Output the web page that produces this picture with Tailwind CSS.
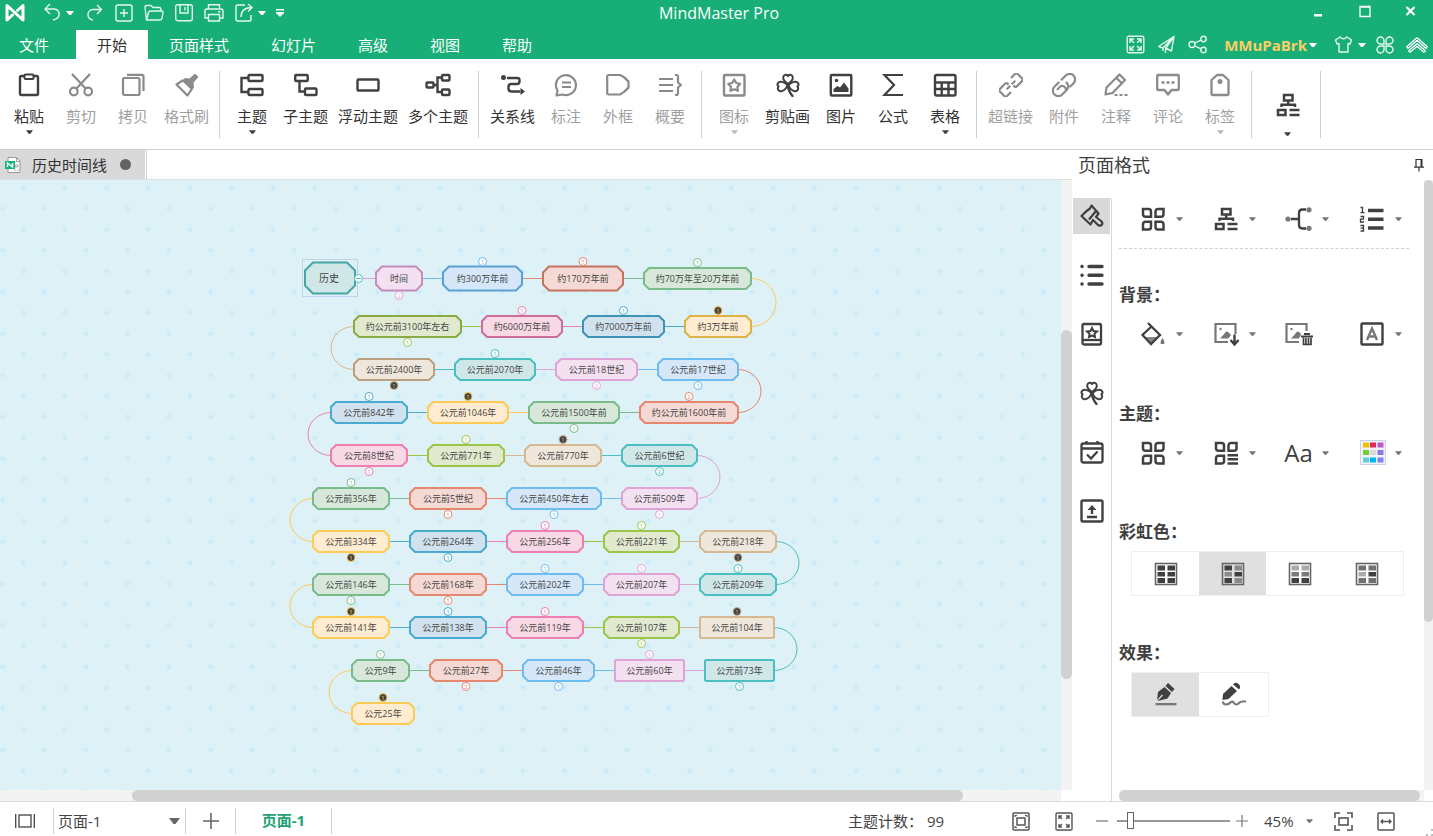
<!DOCTYPE html>
<html lang="zh-CN">
<head>
  <meta charset="UTF-8">
  <meta name="viewport" content="width=device-width, initial-scale=1.0">
  <title>MindMaster Pro</title>
  <script src="https://cdn.jsdelivr.net/npm/@tailwindcss/browser@4"></script>
  <style>
    body, button, select, input {
      font-family: 'Open Sans', 'Noto Sans CJK SC', sans-serif;
    }
  </style>
</head>
<body class="h-screen flex flex-col overflow-hidden bg-white text-[15px] leading-5 text-[#333]">

<!-- shared icons -->
<svg class="hidden">
  <symbol id="caret" viewBox="0 0 8 4"><path d="M0 0h8L5 4H3z" fill="currentColor"/></symbol>
  <symbol id="four" viewBox="0 0 24 24">
    <g fill="none" stroke="currentColor" stroke-width="2.5">
      <path d="M2 2h5.500a2.500 2.500 0 0 1 2.500 2.500V9.800H4.500A2.500 2.500 0 0 1 2 7.500z"/>
      <path d="M22.500 2H17a2.500 2.500 0 0 0-2.500 2.500v5.300H20a2.500 2.500 0 0 0 2.500-2.500z"/>
      <path d="M2 22.500h5.500A2.500 2.500 0 0 0 10 20v-5.300H4.500A2.500 2.500 0 0 0 2 17.200z"/>
      <path d="M22.500 22.500H17a2.500 2.500 0 0 1-2.500-2.500v-5.300H20a2.500 2.500 0 0 1 2.500 2.500z"/>
    </g>
  </symbol>
  <symbol id="org" viewBox="0 0 24 24">
    <g fill="none" stroke="currentColor" stroke-width="2.500">
      <path d="M8 2h8.500v5.500H8zM2 17h7.500v5H2zM12.200 8v4M5.500 14v-2.200h13.500v2.200M13.500 17h10M13.500 22h10"/>
    </g>
  </symbol>
  <symbol id="clover" viewBox="0 0 24 24">
    <g fill="none" stroke="currentColor" stroke-width="2" stroke-linejoin="round" stroke-linecap="round">
      <path d="M12 11C9 9 7 7 7.200 4.500 7.500 1.500 11 .800 12 3.200 13 .800 16.500 1.500 16.800 4.500 17 7 15 9 12 11z"/>
      <path d="M11.500 12C9 9.500 7 8.500 4.500 8.800 1.500 9.200 .500 12 2.600 13.300 .800 15.500 2.500 18.500 5 18.200 8 18 10.500 15 11.500 12z"/>
      <path d="M12.500 12c2.500-2.500 4.500-3.500 7-3.200 3 .400 4 3.200 1.900 4.500 1.800 2.200.100 5.200-2.400 4.900C16 18 13.500 15 12.500 12z"/>
      <path d="M12 12c0 4 1.500 7.500 4.500 11" stroke-width="2.400"/>
    </g>
  </symbol>
</svg>

<!-- title bar + menu tabs -->
<header class="bg-[#17ae78] text-white shrink-0">
  <div class="flex items-center h-[30px] pb-1">
    <div class="flex-1 flex items-center gap-[10px] pl-[5px]">
      <svg class="w-5 h-5 mr-[7px]" viewBox="0 0 20 20" fill="none" stroke="#fff" stroke-width="3" stroke-linejoin="round" stroke-linecap="round"><path d="M7.500 12L2 17V2.500l16 14.500V2.500l-5.500 5"/></svg>
      <div class="flex items-center gap-1">
        <button aria-label="撤销"><svg class="w-5 h-5" viewBox="0 0 20 20" fill="none" stroke="#e4f7ef" stroke-width="1.400"><path d="M8 1L3 6l5 5M3 6h9a5 5 0 0 1 5 6q-.500 4-6 5"/></svg></button>
        <button aria-label="撤销选项"><svg class="w-2 h-1"><use href="#caret"/></svg></button>
      </div>
      <button aria-label="重做"><svg class="w-5 h-5" viewBox="0 0 20 20" fill="none" stroke="#e4f7ef" stroke-width="1.400"><path d="M13 2l4.500 4.500L13 11M17.500 6.500H9A5 5 0 0 0 4 12q0 4 5 5"/></svg></button>
      <button aria-label="新建"><svg class="w-5 h-5" viewBox="0 0 20 20" fill="none" stroke="#e4f7ef" stroke-width="1.400"><rect x="2" y="2" width="16" height="16" rx="2"/><path d="M10 6v8M6 10h8"/></svg></button>
      <button aria-label="打开"><svg class="w-5 h-5" viewBox="0 0 20 20" fill="none" stroke="#e4f7ef" stroke-width="1.400" stroke-linejoin="round"><path d="M2.500 17L1 4q0-1.500 1.500-1.500H7l2 2h6.500Q17 4.500 17 8M2.500 17H16q1.500 0 2-1.500l1-6Q19 8 17.500 8H6.500Q5 8 4.500 9.500z"/></svg></button>
      <button aria-label="保存"><svg class="w-5 h-5" viewBox="0 0 20 20" fill="none" stroke="#e4f7ef" stroke-width="1.400"><rect x="1.700" y="1.700" width="16.600" height="16" rx="2"/><path d="M6 2v8h8V2M11 4v3.500"/></svg></button>
      <button aria-label="打印"><svg class="w-5 h-5" viewBox="0 0 20 20" fill="none" stroke="#e4f7ef" stroke-width="1.400"><path d="M4.500 6V1.700h11V6M4.500 15H1V8q0-2 2-2h14q2 0 2 2v7h-3.500M4.500 11.500h11V18h-11zM14 8.700h2.500"/></svg></button>
      <div class="flex items-center gap-1">
        <button aria-label="导出"><svg class="w-5 h-5" viewBox="0 0 20 20" fill="none" stroke="#e4f7ef" stroke-width="1.400"><path d="M11 2H3.500Q2 2 2 3.500v13Q2 18 3.500 18h12q1.500 0 1.500-1.500V12M7 14q0-9 10-9.500M14 1l4 3.500L14 8.500"/></svg></button>
        <button aria-label="导出选项"><svg class="w-2 h-1"><use href="#caret"/></svg></button>
      </div>
      <button aria-label="自定义快速访问"><svg class="w-2 h-2" viewBox="0 0 8 8" fill="#fff"><path d="M0 0h8v1.500H0zM0 3h8v1L4 8 0 4z"/></svg></button>
    </div>
    <h1 class="text-base">MindMaster Pro</h1>
    <div class="flex-1 flex justify-end">
      <button aria-label="最小化" class="w-[46px] h-[22px] flex justify-center items-center"><svg class="w-4 h-4" viewBox="0 0 16 16"><path d="M4 9h8v2.500H4z" fill="#fff"/></svg></button>
      <button aria-label="最大化" class="w-[46px] h-[22px] flex justify-center items-center"><svg class="w-4 h-4" viewBox="0 0 16 16"><path d="M4 1.500h10v10H4z M3.500 2h11" fill="none" stroke="#fff" stroke-width="1.300"/></svg></button>
      <button aria-label="关闭" class="w-[46px] h-[22px] flex justify-center items-center"><svg class="w-4 h-4" viewBox="0 0 16 16"><path d="M4.500 2l8 8M12.500 2l-8 8" stroke="#fff" stroke-width="2.200"/></svg></button>
    </div>
  </div>
  <div class="flex h-[29px]">
    <nav class="flex flex-1">
      <button class="pl-[19px] pr-[27px]">文件</button>
      <button class="px-[21px] bg-white text-[#333]">开始</button>
      <button class="px-[21px]">页面样式</button>
      <button class="px-[21px]">幻灯片</button>
      <button class="px-[21px]">高级</button>
      <button class="px-[21px]">视图</button>
      <button class="px-[21px]">帮助</button>
    </nav>
    <div class="flex items-center gap-3 pr-[5px]">
      <button aria-label="全屏"><svg class="w-[19px] h-[19px]" viewBox="0 0 19 19" fill="none" stroke="#e4f7ef" stroke-width="1.400"><rect x="1.200" y="1.200" width="16.600" height="16.600" rx="1.500"/><path d="M4 8V4h4M4 4l4 4M11 4h4v4M15 4l-4 4M4 11v4h4M4 15l4-4M15 11v4h-4M15 15l-4-4" stroke-width="1.500"/></svg></button>
      <button aria-label="发送"><svg class="w-[19px] h-[19px]" viewBox="0 0 19 19" fill="none" stroke="#e4f7ef" stroke-width="1.400" stroke-linejoin="round"><path d="M1.500 11.500L17 1.500 14.500 16 8.500 13 M6 13L17 1.500 8.500 13.500V18M1.500 11.500L6 13v3"/></svg></button>
      <button aria-label="分享"><svg class="w-[19px] h-[19px]" viewBox="0 0 19 19" fill="none" stroke="#e4f7ef" stroke-width="1.400"><circle cx="4" cy="9.500" r="3"/><circle cx="15.500" cy="4" r="2.700"/><circle cx="15.500" cy="15" r="2.700"/><path d="M6.700 8.200L13 5M6.700 10.800l6.300 3"/></svg></button>
      <button class="flex items-center gap-[2px] ml-[5px] text-[#fbce65] font-bold">MMuPaBrk<svg class="w-2 h-1 text-white"><use href="#caret"/></svg></button>
      <div class="flex items-center gap-[10px] ml-[5px]">
        <button aria-label="皮肤" class="flex items-center gap-[5px]"><svg class="w-[19px] h-[19px]" viewBox="0 0 19 19" fill="none" stroke="#e4f7ef" stroke-width="1.400" stroke-linejoin="round"><path d="M6 2Q9.500 5.500 13 2l4.500 3-1.500 4-2-.500V17H5V8.500L3 9 1.500 5z"/></svg><svg class="w-2 h-1"><use href="#caret"/></svg></button>
        <button aria-label="应用"><svg class="w-[18px] h-[18px]" viewBox="0 0 18 18" fill="none" stroke="#e4f7ef" stroke-width="1.400"><path d="M8 8H4.700A3.500 3.500 0 1 1 8 4.700zM10 8h3.300A3.500 3.500 0 1 0 10 4.700zM8 10H4.700A3.500 3.500 0 1 0 8 13.300zM10 10h3.300A3.500 3.500 0 1 1 10 13.300z"/></svg></button>
      </div>
      <button aria-label="收起功能区"><svg class="w-[22px] h-[16px]" viewBox="0 0 22 16" fill="none" stroke-linejoin="round" stroke-linecap="round"><path d="M2 10l9-8 9 8M4 14l7-6 7 6" stroke="#fff" stroke-width="3.400"/><path d="M2 10l9-8 9 8M4 14l7-6 7 6" stroke="#17ae78" stroke-width="1"/></svg></button>
    </div>
  </div>
</header>

<!-- ribbon -->
<section class="flex shrink-0 h-[91px] pt-3 pl-[3px] border-b border-[#cfcfcf] text-[#404040]" aria-label="开始">
  <div class="flex h-[67px] pr-[5px] border-r border-[#d0d0d0]">
    <button class="w-[52px] flex flex-col items-center pt-[2px]">
      <svg class="w-6 h-6" viewBox="0 0 24 24" fill="none" stroke="currentColor" stroke-width="2.400"><rect x="3" y="3" width="18" height="19" rx="1.500"/><rect x="7.500" y="1.500" width="9" height="4.500" rx="1" fill="#fff" stroke-width="2"/></svg>
      <span class="mt-[9px] text-[#333]">粘贴</span><svg class="w-[7px] h-1 mt-1"><use href="#caret"/></svg>
    </button>
    <button class="w-[52px] flex flex-col items-center pt-[2px] text-[#8a8a8a]">
      <svg class="w-6 h-6" viewBox="0 0 24 24" fill="none" stroke="currentColor" stroke-width="2.200"><path d="M3 1l14 15M21 1L7 16"/><circle cx="4.800" cy="18.500" r="3.800"/><circle cx="19.200" cy="18.500" r="3.800"/></svg>
      <span class="mt-[9px] text-[#a0a0a0]">剪切</span>
    </button>
    <button class="w-[52px] flex flex-col items-center pt-[2px] text-[#8a8a8a]">
      <svg class="w-6 h-6" viewBox="0 0 24 24" fill="none" stroke="currentColor" stroke-width="2.200"><rect x="2" y="5" width="16.500" height="17" rx="1.500"/><path d="M6 1.800h15q1.500 0 1.500 1.500V18"/></svg>
      <span class="mt-[9px] text-[#a0a0a0]">拷贝</span>
    </button>
    <button class="w-[55px] flex flex-col items-center pt-[2px] text-[#8a8a8a]">
      <svg class="w-6 h-6" viewBox="0 0 24 24"><path d="M10 5l4.500.500L20 .500 23.500 4l-5 5.500.500 5-2.500 2.500-9.500-9z" fill="currentColor"/><path d="M8.500 7L1.500 11.500 12.500 22.500 17.500 15" fill="none" stroke="currentColor" stroke-width="2.200" stroke-linejoin="round"/></svg>
      <span class="mt-[9px] text-[#a0a0a0]">格式刷</span>
    </button>
  </div>

  <div class="flex h-[67px] pl-[6px] pr-[5px] border-r border-[#d0d0d0]">
    <button class="w-[52px] flex flex-col items-center pt-[2px]">
      <svg class="w-6 h-6" viewBox="0 0 24 24" fill="none" stroke="currentColor" stroke-width="2.400"><rect x="8.500" y="2" width="14" height="6" rx="1"/><rect x="8.500" y="16" width="14" height="6" rx="1"/><path d="M8 5H1.500v14H8"/></svg>
      <span class="mt-[9px] text-[#333]">主题</span><svg class="w-[7px] h-1 mt-1"><use href="#caret"/></svg>
    </button>
    <button class="w-[55px] flex flex-col items-center pt-[2px]">
      <svg class="w-6 h-6" viewBox="0 0 24 24" fill="none" stroke="currentColor" stroke-width="2.400"><rect x="1.200" y="2" width="12.500" height="6" rx="1"/><rect x="11" y="15.500" width="11.500" height="6.500" rx="1"/><path d="M5.500 8v10.500H11"/></svg>
      <span class="mt-[9px] text-[#333]">子主题</span>
    </button>
    <button class="w-[70px] flex flex-col items-center pt-[2px]">
      <svg class="w-6 h-6" viewBox="0 0 24 24" fill="none" stroke="currentColor" stroke-width="2.400"><rect x="1.500" y="6.500" width="21" height="11" rx="1"/></svg>
      <span class="mt-[9px] text-[#333]">浮动主题</span>
    </button>
    <button class="w-[70px] flex flex-col items-center pt-[2px]">
      <svg class="w-[26px] h-6" viewBox="0 0 26 24" fill="none" stroke="currentColor" stroke-width="2.400"><rect x="1.500" y="9.500" width="7" height="5" rx="1"/><rect x="17" y="2" width="7.500" height="5.500" rx="1"/><rect x="17" y="16.500" width="7.500" height="5.500" rx="1"/><path d="M8.500 12H12M17 4.500h-4.500v14.500H17"/></svg>
      <span class="mt-[9px] text-[#333]">多个主题</span>
    </button>
  </div>

  <div class="flex h-[67px] pl-[6px] pr-[5px] border-r border-[#d0d0d0]">
    <button class="w-[55px] flex flex-col items-center pt-[2px]">
      <svg class="w-6 h-6" viewBox="0 0 24 24" fill="none" stroke="currentColor" stroke-width="2.400"><path d="M6 5h10q2.500 0 2.500 2v1.500q0 2.500-2.500 2.500h-5.500Q7.500 11 7.500 13.500v2q0 3 3 3h9"/><circle cx="2.500" cy="4.500" r="2.500" fill="currentColor" stroke="none"/><path d="M19.500 15v7l4.500-3.500z" fill="currentColor" stroke="none"/></svg>
      <span class="mt-[9px] text-[#333]">关系线</span>
    </button>
    <button class="w-[52px] flex flex-col items-center pt-[2px] text-[#8a8a8a]">
      <svg class="w-6 h-6" viewBox="0 0 24 24" fill="none" stroke="currentColor" stroke-width="2.200" stroke-linejoin="round"><path d="M2.500 22.500l1-5A10 10 0 1 1 8.500 21.500zM8 9.500h9M8 14h9"/></svg>
      <span class="mt-[9px] text-[#a0a0a0]">标注</span>
    </button>
    <button class="w-[52px] flex flex-col items-center pt-[2px] text-[#8a8a8a]">
      <svg class="w-6 h-6" viewBox="0 0 24 24" fill="none" stroke="currentColor" stroke-width="2.200" stroke-linejoin="round"><path d="M2.500 2H14q5 2 8.500 6.500v6Q19 19 14 21.500H2.500Q1.200 21.500 1.200 20v-16.500Q1.200 2 2.500 2z"/></svg>
      <span class="mt-[9px] text-[#a0a0a0]">外框</span>
    </button>
    <button class="w-[52px] flex flex-col items-center pt-[2px] text-[#8a8a8a]">
      <svg class="w-6 h-6" viewBox="0 0 24 24" fill="none" stroke="currentColor" stroke-width="2.200"><path d="M1 6h14M1 12h14M1 18h14M17 2h1.500q1.500 0 1.500 2v5.500l3 2.500-3 2.500V20q0 2-1.500 2H17"/></svg>
      <span class="mt-[9px] text-[#a0a0a0]">概要</span>
    </button>
  </div>

  <div class="flex h-[67px] pl-[6px] pr-[5px] border-r border-[#d0d0d0]">
    <button class="w-[52px] flex flex-col items-center pt-[2px] text-[#8a8a8a]">
      <svg class="w-6 h-6" viewBox="0 0 24 24" fill="none" stroke="currentColor" stroke-width="2.400" stroke-linejoin="round"><rect x="2" y="2" width="20.500" height="20.500" rx="1"/><path d="M12.200 6.500l2 3.500 4 .800-2.800 3 .500 4-3.700-1.600-3.700 1.600.500-4-2.800-3 4-.800z" stroke-width="2.200"/></svg>
      <span class="mt-[9px] text-[#a0a0a0]">图标</span><svg class="w-[7px] h-1 mt-1 text-[#bbb]"><use href="#caret"/></svg>
    </button>
    <button class="w-[55px] flex flex-col items-center pt-[2px]">
      <svg class="w-6 h-6"><use href="#clover"/></svg>
      <span class="mt-[9px] text-[#333]">剪贴画</span>
    </button>
    <button class="w-[52px] flex flex-col items-center pt-[2px]">
      <svg class="w-6 h-6" viewBox="0 0 24 24" fill="none" stroke="currentColor" stroke-width="2.400"><rect x="1.800" y="2" width="20.500" height="20.500" rx="1"/><circle cx="7.500" cy="7.500" r="1.800" fill="currentColor" stroke="none"/><path d="M4.500 19v-3l4-3 2.500 1.500 4-5 4.500 6V19z" fill="currentColor" stroke="none"/></svg>
      <span class="mt-[9px] text-[#333]">图片</span>
    </button>
    <button class="w-[52px] flex flex-col items-center pt-[2px]">
      <svg class="w-6 h-6" viewBox="0 0 24 24" fill="none" stroke="currentColor" stroke-width="2.200"><path d="M22 2H3.500L13 12 3.500 22H22"/></svg>
      <span class="mt-[9px] text-[#333]">公式</span>
    </button>
    <button class="w-[52px] flex flex-col items-center pt-[2px]">
      <svg class="w-6 h-6" viewBox="0 0 24 24" fill="none" stroke="currentColor" stroke-width="2.400"><rect x="2" y="2" width="20.500" height="20.500" rx="1.500"/><path d="M2 9.500h20M2 16h20M8.700 9.500v13M15.500 9.500v13"/></svg>
      <span class="mt-[9px] text-[#333]">表格</span><svg class="w-[7px] h-1 mt-1"><use href="#caret"/></svg>
    </button>
  </div>

  <div class="flex h-[67px] pl-[6px] pr-[5px] border-r border-[#d0d0d0] text-[#8a8a8a]">
    <button class="w-[55px] flex flex-col items-center pt-[2px]">
      <svg class="w-6 h-6" viewBox="-12 -12 24 24" fill="none" stroke="currentColor" stroke-width="2.200"><g transform="rotate(-45)"><path d="M-1.500 -2V-3.500Q-1.500 -5-3-5H-11q-1.500 0-1.500 1.500v7Q-12.500 5-11 5h6M1.500 2V3.500Q1.500 5 3 5H11q1.500 0 1.500-1.500v-7Q12.500-5 11-5H5M-6 0H-1M1 0H6"/></g></svg>
      <span class="mt-[9px] text-[#a0a0a0]">超链接</span>
    </button>
    <button class="w-[52px] flex flex-col items-center pt-[2px]">
      <svg class="w-6 h-6" viewBox="-12 -12 24 24" fill="none" stroke="currentColor" stroke-width="2.200" stroke-linecap="round"><g transform="rotate(-45)"><path d="M3.500 5.500H8A5.500 5.500 0 0 0 8-5.500H2M-2-5.500H-8A5.500 5.500 0 0 0-8 5.500H-3A4 4 0 0 0-3-1.500H-7.500M-3 5.500Q3.500 5.500 3.500 0"/></g></svg>
      <span class="mt-[9px] text-[#a0a0a0]">附件</span>
    </button>
    <button class="w-[52px] flex flex-col items-center pt-[2px]">
      <svg class="w-6 h-6" viewBox="0 0 24 24" fill="none" stroke="currentColor" stroke-width="2.200" stroke-linejoin="round"><path d="M1.500 21.500L2.500 14.500 15.500 1.500 21 7 8.500 20zM12.500 5l5.500 5.500"/><path d="M10.500 22h13" stroke-dasharray="3 2"/></svg>
      <span class="mt-[9px] text-[#a0a0a0]">注释</span>
    </button>
    <button class="w-[52px] flex flex-col items-center pt-[2px]">
      <svg class="w-6 h-6" viewBox="0 0 24 24" fill="none" stroke="currentColor" stroke-width="2.300" stroke-linejoin="round"><path d="M2.200 2h19.600q1 0 1 1v13q0 1-1 1h-6.300L12 21.500 8.500 17H2.200q-1 0-1-1V3q0-1 1-1z"/><path d="M5.500 9.500h3M10.500 9.500h3M15.500 9.500h3"/></svg>
      <span class="mt-[9px] text-[#a0a0a0]">评论</span>
    </button>
    <button class="w-[52px] flex flex-col items-center pt-[2px]">
      <svg class="w-6 h-6" viewBox="0 0 24 24" fill="none" stroke="currentColor" stroke-width="2.300" stroke-linejoin="round"><path d="M9 2h6l5.500 5v13.500q0 1.500-1.500 1.500H5q-1.500 0-1.500-1.500V7z"/><circle cx="12" cy="8.500" r="2.500" fill="currentColor" stroke="none"/></svg>
      <span class="mt-[9px] text-[#a0a0a0]">标签</span><svg class="w-[7px] h-1 mt-1 text-[#bbb]"><use href="#caret"/></svg>
    </button>
  </div>

  <div class="flex h-[67px] pl-[6px] pr-[5px] border-r border-[#d0d0d0]">
    <button aria-label="布局" class="w-[57px] flex flex-col items-center pt-[22px] pl-[2px]">
      <svg class="w-6 h-6"><use href="#org"/></svg>
      <svg class="w-[7px] h-1 mt-[15px]"><use href="#caret"/></svg>
    </button>
  </div>
</section>

<!-- work area -->
<div class="flex flex-1 min-h-0">
  <main class="flex-1 min-w-0 flex flex-col">
    <div class="flex h-[30px] shrink-0 border-b border-[#dedede]">
      <div class="flex items-center pl-[5px] pr-[14px] bg-[#d9d9d9]">
        <svg class="w-4 h-4" viewBox="0 0 16 16"><path d="M3 .500h8.500l3.500 3.500V15.500H3z" fill="#fff" stroke="#999"/><path d="M11.500 1v3.500H15" fill="none" stroke="#999"/><path d="M10 8h3v2h-3zM9 13h2M12 13h2" stroke="#aaa" fill="none"/><rect y="4" width="10" height="8" fill="#12b27b"/><path d="M2.500 10V6l5 4V6" fill="none" stroke="#fff" stroke-width="1.500"/></svg>
        <span class="ml-[11px]">历史时间线</span>
        <button aria-label="关闭文档" class="ml-[13px] w-[11px] h-[11px] rounded-full bg-[#636363]"></button>
      </div>
      <div class="ml-px border-l border-[#d0d0d0]"></div>
    </div>
    <div class="flex flex-1 min-h-0">
      <div class="flex-1 min-w-0 bg-[#def1f7]">
        <svg id="canvas" class="block w-full h-full">
          <defs>
            <pattern id="dots" x="294" y="112" width="41.640" height="41.640" patternUnits="userSpaceOnUse">
              <path d="M0 -3l3 3-3 3-3-3zM41.640 -3l3 3-3 3-3-3zM0 38.640l3 3-3 3-3-3zM41.640 38.640l3 3-3 3-3-3zM20.820 17.820l3 3-3 3-3-3z" fill="#c9ebfa"/>
            </pattern>
          </defs>
          <rect width="100%" height="100%" fill="url(#dots)"/>
        </svg>
      </div>
      <div class="w-[11px] bg-[#f3f3f3] pt-[150px]"><div class="h-[349px] rounded-md bg-[#d1d1d1]"></div></div>
    </div>
    <div class="h-[11px] shrink-0 mr-[11px] bg-[#f3f3f3] pl-[132px]"><div class="h-full w-[831px] rounded-md bg-[#d1d1d1]"></div></div>
  </main>

  <!-- page format panel -->
  <aside class="w-[361px] shrink-0 flex flex-col text-[#404040]">
    <div class="flex items-center justify-between h-[30px] shrink-0 pl-[6px] pr-2">
      <h2 class="text-lg">页面格式</h2>
      <button aria-label="固定"><svg class="w-3 h-[14px]" viewBox="0 0 12 14" fill="none" stroke="#333" stroke-width="1.200"><path d="M3 9V1.500h6M1 9.200h10M6 9v4.500"/><path d="M8.500 1v8" stroke-width="2"/></svg></button>
    </div>
    <div class="flex flex-1 min-h-0">
      <div class="w-10 shrink-0 mt-[18px] pl-px flex flex-col gap-[23px] border-r border-[#dadada]">
        <button aria-label="页面格式" class="w-[37px] h-9 flex items-center justify-center bg-[#d9d9d9]"><svg class="w-6 h-6" viewBox="0 0 24 24" fill="none" stroke="currentColor" stroke-width="2.200" stroke-linejoin="round"><path d="M11.500 1.500l-1.500 3-4 3L1.500 12l9 8.500 2.500-4.500 5 5q2.500 1.500 4-.500 1-2-1-3.500l-5-4 2.500-3.500zM9 15.500L16 7"/></svg></button>
        <button aria-label="大纲" class="w-[37px] h-9 flex items-center justify-center"><svg class="w-6 h-6" viewBox="0 0 24 24" fill="none" stroke="currentColor" stroke-width="3.400" stroke-linecap="round"><path d="M9 3.500h13M9 12.200h13M9 21h13M2 3.500h.100M2 12.200h.100M2 21h.100"/></svg></button>
        <button aria-label="图标" class="w-[37px] h-9 flex items-center justify-center"><svg class="w-6 h-6" viewBox="0 0 24 24" fill="none" stroke="currentColor" stroke-width="2.300"><rect x="2.500" y="2" width="18.500" height="20.500" rx="1.500"/><path d="M2.500 18h19"/><path d="M12 6l1.500 3 3.500.500-2.500 2.300.500 3.200-3-1.500L9 15l.500-3.200L7 9.500l3.500-.500z" stroke-width="2"/></svg></button>
        <button aria-label="剪贴画" class="w-[37px] h-9 flex items-center justify-center"><svg class="w-6 h-6"><use href="#clover"/></svg></button>
        <button aria-label="任务" class="w-[37px] h-9 flex items-center justify-center"><svg class="w-6 h-6" viewBox="0 0 24 24" fill="none" stroke="currentColor" stroke-width="2.300"><rect x="1.500" y="3.500" width="21" height="19" rx="2"/><path d="M2 8.500h20M6.500 1v3M17.500 1v3M7 14.500l4 4 6.500-7"/></svg></button>
        <button aria-label="导出" class="w-[37px] h-9 flex items-center justify-center"><svg class="w-6 h-6" viewBox="0 0 24 24" fill="none" stroke="currentColor" stroke-width="2.400"><rect x="1.500" y="1.500" width="21" height="21" rx="1.500"/><path d="M7 18h10M12 15V8"/><path d="M7.500 11L12 6l4.500 5z" fill="currentColor" stroke="none"/></svg></button>
      </div>
      <div class="flex-1 min-w-0 flex flex-col pl-[7px]">
        <div class="flex-1 min-h-0 flex">
          <div class="flex-1 min-w-0 pt-[27px]">
            <div class="grid grid-cols-[repeat(4,73px)] pl-[22px]">
              <button aria-label="布局" class="flex items-center gap-[11px]"><svg class="w-6 h-6"><use href="#four"/></svg><svg class="w-[7px] h-1 text-[#777]"><use href="#caret"/></svg></button>
              <button aria-label="结构" class="flex items-center gap-[11px]"><svg class="w-6 h-6"><use href="#org"/></svg><svg class="w-[7px] h-1 text-[#777]"><use href="#caret"/></svg></button>
              <button aria-label="连接线样式" class="flex items-center gap-[11px]"><svg class="w-6 h-6 overflow-visible" viewBox="0 0 24 24" fill="none" stroke="currentColor" stroke-width="2.300"><path d="M4 12h8M19 2.500h-3.500Q12 2.500 12 6v12q0 3.500 3.500 3.500H19"/><g fill="#777" stroke="none"><circle cx="1" cy="12" r="2.600"/><circle cx="22" cy="2.800" r="2.600"/><circle cx="22" cy="21.300" r="2.600"/></g></svg><svg class="w-[7px] h-1 text-[#777]"><use href="#caret"/></svg></button>
              <button aria-label="编号" class="flex items-center gap-[11px]"><svg class="w-6 h-6 overflow-visible" viewBox="0 0 24 24" fill="none" stroke="currentColor"><path d="M8 3.500h15.500M8 12.200h15.500M8 21h15.500" stroke-width="3.600"/><path d="M.500 .500h2v5M.500 5.700h4M.500 9.500h3v2.700h-3V15h3.500M.500 18.500h3V24h-3M.500 21.200h3" stroke-width="1.300"/></svg><svg class="w-[7px] h-1 text-[#777]"><use href="#caret"/></svg></button>
            </div>
            <div class="mt-[17px] mr-[15px] border-t border-dashed border-[#cfcfcf]"></div>

            <h3 class="mt-[36px] text-[17px] font-bold">背景：</h3>
            <div class="grid grid-cols-[repeat(4,73px)] pl-[22px] mt-[17px]">
              <button aria-label="背景填充" class="flex items-center gap-[11px]"><svg class="w-6 h-6" viewBox="0 0 24 24" fill="none" stroke="currentColor" stroke-width="2.300"><path d="M4 15h13l-7 7z" fill="#888" stroke="none"/><path d="M10.500 4.500L19 13l-9 9-8.500-9zM7 1l4 4"/><path d="M21.500 16q3 4 1.500 6h-3q-1.500-2 1.500-6z" fill="#777" stroke="none"/></svg><svg class="w-[7px] h-1 text-[#777]"><use href="#caret"/></svg></button>
              <button aria-label="背景图片" class="flex items-center gap-[11px]"><svg class="w-6 h-6 overflow-visible" viewBox="0 0 24 24" fill="none" stroke="#777" stroke-width="2.200"><path d="M14 20H1.500V2h20v10"/><path d="M6 16.500q4-4 6-7 3 0 5 4l-3 3z" fill="#777" stroke="none"/><path d="M5.500 7h2"/><path d="M20.500 12.500v10M16.500 18l4 4.500 4-4.500" stroke="#404040" stroke-width="2.400"/></svg><svg class="w-[7px] h-1 text-[#777]"><use href="#caret"/></svg></button>
              <button aria-label="移除背景图片" class="flex items-center"><svg class="w-6 h-6 overflow-visible" viewBox="2 0 24 24" fill="none" stroke="#777" stroke-width="2.200"><path d="M14 20H1.500V2h20v7"/><path d="M6 16.500q4-4 6-7 3 0 4 3l-2 4z" fill="#777" stroke="none"/><path d="M5.500 7h2"/><g stroke="#404040"><path d="M16 14.500h12M19 12h6" stroke-width="2"/><path d="M18.500 15.500v7h7.500v-7M20.900 16v6M23.500 16v6" stroke-width="1.700"/></g></svg></button>
              <button aria-label="水印" class="flex items-center gap-[11px]"><svg class="w-6 h-6" viewBox="0 0 24 24" fill="none" stroke="currentColor" stroke-width="2.400"><rect x="1.500" y="1.500" width="21" height="21" rx="1"/><path d="M7 18L12 6.500 17 18M8.500 14.500h7" stroke="#777" stroke-width="2.400"/></svg><svg class="w-[7px] h-1 text-[#777]"><use href="#caret"/></svg></button>
            </div>

            <h3 class="mt-[58px] text-[17px] font-bold">主题：</h3>
            <div class="grid grid-cols-[repeat(4,73px)] pl-[22px] mt-4">
              <button aria-label="主题" class="flex items-center gap-[11px]"><svg class="w-6 h-6"><use href="#four"/></svg><svg class="w-[7px] h-1 text-[#777]"><use href="#caret"/></svg></button>
              <button aria-label="主题列表" class="flex items-center gap-[11px]"><svg class="w-6 h-6" viewBox="0 0 24 24" fill="none" stroke="currentColor" stroke-width="2.500"><path d="M2 2h5.500A2.500 2.500 0 0 1 10 4.500V9.800H4.500A2.500 2.500 0 0 1 2 7.500zM22.500 2H17a2.500 2.500 0 0 0-2.500 2.500v5.300H20a2.500 2.500 0 0 0 2.500-2.500zM2 22.500h5.500A2.500 2.500 0 0 0 10 20v-5.300H4.500A2.500 2.500 0 0 0 2 17.200zM13.500 14.200H24M13.500 18.300H24M13.500 22.400H24"/></svg><svg class="w-[7px] h-1 text-[#777]"><use href="#caret"/></svg></button>
              <button aria-label="主题字体" class="flex items-center gap-[9px] h-[25px]"><span class="w-[29px] -ml-[3px] text-2xl leading-6 font-medium">Aa</span><svg class="w-[7px] h-1 shrink-0 text-[#777]"><use href="#caret"/></svg></button>
              <button aria-label="主题颜色" class="flex items-center gap-[9px]"><svg class="w-[26px] h-[25px]" viewBox="0 0 26 25"><rect x=".500" y=".500" width="25" height="24" fill="#f1f3fa" stroke="#cdd2e6"/><path d="M3 2.500h6v5H3z" fill="#f2c100"/><path d="M10 2.500h6v5h-6z" fill="#de2c50"/><path d="M17.500 2.500h6v5h-6z" fill="#c751cb"/><path d="M3 10h6v5H3z" fill="#74cd3b"/><path d="M10 10h6v5h-6z" fill="#d9d9d9"/><path d="M17.500 10h6v5h-6z" fill="#9373ea"/><path d="M3 17.500h6v5H3z" fill="#68c9d8"/><path d="M10 17.500h6v5h-6z" fill="#00b4f5"/><path d="M17.500 17.500h6v5h-6z" fill="#7b83fb"/></svg><svg class="w-[7px] h-1 text-[#777]"><use href="#caret"/></svg></button>
            </div>

            <h3 class="mt-[57px] text-[17px] font-bold">彩虹色：</h3>
            <div class="flex w-fit mt-[9px] ml-3 pr-[3px] border border-[#efefef]">
              <button aria-label="彩虹色 1" class="w-[67px] h-[43px] flex items-center justify-center"><svg class="w-6 h-6" viewBox="0 0 24 24"><rect x="1.500" y="1.500" width="21" height="21" fill="#fff" stroke="#666" stroke-width="1.600"/><path d="M3.500 3.500h7.500v5H3.500zM13.500 3.500H21v5h-7.500zM3.500 10h7.500v4.500H3.500zM13.500 10H21v4.500h-7.500zM3.500 16h7.500v5H3.500zM13.500 16H21v5h-7.500z" fill="#404040"/></svg></button>
              <button aria-label="彩虹色 2" class="w-[67px] h-[43px] flex items-center justify-center bg-[#e0e0e0]"><svg class="w-6 h-6" viewBox="0 0 24 24"><rect x="1.500" y="1.500" width="21" height="21" fill="none" stroke="#666" stroke-width="1.600"/><path d="M3.500 3.500h7.500v5H3.500zM13.500 10H21v4.500h-7.500zM3.500 16h7.500v5H3.500z" fill="#404040"/><path d="M13.500 3.500H21v5h-7.500zM3.500 10h7.500v4.500H3.500zM13.500 16H21v5h-7.500z" fill="#8a8a8a"/></svg></button>
              <button aria-label="彩虹色 3" class="w-[67px] h-[43px] flex items-center justify-center"><svg class="w-6 h-6" viewBox="0 0 24 24"><rect x="1.500" y="1.500" width="21" height="21" fill="none" stroke="#666" stroke-width="1.600"/><path d="M3.500 3.500h7.500v5H3.500zM13.500 3.500H21v5h-7.500z" fill="#aaa"/><path d="M3.500 10h7.500v4.500H3.500zM13.500 10H21v4.500h-7.500z" fill="#7a7a7a"/><path d="M3.500 16h7.500v5H3.500zM13.500 16H21v5h-7.500z" fill="#404040"/></svg></button>
              <button aria-label="彩虹色 4" class="w-[67px] h-[43px] flex items-center justify-center"><svg class="w-6 h-6" viewBox="0 0 24 24"><rect x="1.500" y="1.500" width="21" height="21" fill="none" stroke="#666" stroke-width="1.600"/><path d="M3.500 3.500h7.500v5H3.500zM13.500 3.500H21v5h-7.500zM3.500 16h7.500v5H3.500zM13.500 16H21v5h-7.500z" fill="#707070"/><path d="M3.500 10h7.500v4.500H3.500z" fill="#aaa"/><path d="M13.500 10H21v4.500h-7.500z" fill="#404040"/></svg></button>
            </div>

            <h3 class="mt-[47px] text-[17px] font-bold">效果：</h3>
            <div class="flex w-fit mt-[9px] ml-3 pr-[2px] border border-[#efefef]">
              <button aria-label="普通" class="w-[67px] h-[43px] flex items-center justify-center bg-[#e0e0e0]"><svg class="w-6 h-6" viewBox="0 0 24 24" fill="#404040"><path d="M14 0l6.500 6-2.500 3-6.500-6zM10.500 4l6.500 6-3.500 5.500L3.500 18l5.500-5.500-1-1L3 17l1-8z"/><path d="M1.500 20h21v2.300h-21z" fill="#777"/></svg></button>
              <button aria-label="手绘" class="w-[67px] h-[43px] flex items-center justify-center"><svg class="w-6 h-6 overflow-visible" viewBox="0 0 24 24" fill="#404040"><path d="M1.500 17l.500-6 8.500-8 5.500 5-8.500 8zM12 1.500q2.500-3 5.500-.500t.500 5.500z"/><path d="M2 18.500q0 3 3 3 3 0 5-2.500 2-1 3 1 2 3 5 0 2-1.500 3-1.500h4" fill="none" stroke="#777" stroke-width="2.200"/></svg></button>
            </div>
          </div>
          <div class="w-[9px] shrink-0 bg-[#f3f3f3]"><div class="h-[442px] rounded-md bg-[#d1d1d1]"></div></div>
        </div>
        <div class="h-[11px] shrink-0 mr-[9px] bg-[#f3f3f3] pr-1"><div class="h-full rounded-md bg-[#d1d1d1]"></div></div>
      </div>
    </div>
  </aside>
</div>

<!-- status bar -->
<footer class="flex items-center h-[35px] pt-1 shrink-0 border-t border-[#dadada] text-[#444]">
  <button aria-label="页面视图" class="w-[53px] flex justify-center"><svg class="w-5 h-[14px] mr-[3px]" viewBox="0 0 20 14" fill="none" stroke="#444" stroke-width="1.300"><path d="M.700 0v14M19.300 0v14"/><rect x="4" y="1" width="12" height="12"/></svg></button>
  <div class="relative w-[133px] h-[26px] border-x border-[#cfcfcf]">
    <select aria-label="页面" class="appearance-none w-full h-full pl-1"><option>页面-1</option></select>
    <svg class="absolute right-[5px] top-[10px] w-[11px] h-[6px] pointer-events-none" viewBox="0 0 11 6"><path d="M0 0h11L6.500 6h-2z" fill="#666"/></svg>
  </div>
  <button aria-label="添加页面" class="w-[50px] h-[26px] flex justify-center items-center border-r border-[#cfcfcf]"><svg class="w-4 h-4" viewBox="0 0 16 16"><path d="M8 0v16M0 8h16" stroke="#666" stroke-width="1.600"/></svg></button>
  <button class="w-[96px] h-[26px] pb-[2px] border-r border-[#cfcfcf] font-bold text-[#1fa276]">页面-1</button>
  <div class="flex-1"></div>
  <span>主题计数：</span><span class="ml-1 w-[85px]">99</span>
  <button aria-label="适合页面"><svg class="block w-[18px] h-[19px]" viewBox="0 0 18 19" fill="none" stroke="#555" stroke-width="1.500"><rect x="1" y="1" width="16" height="17" rx="1"/><rect x="5" y="6" width="8" height="7"/><path d="M3 5V3.500h2M13 3.500h2V5M3 14v1.500h2M13 15.500h2V14" stroke-width="1.200"/></svg></button>
  <button aria-label="全屏" class="ml-[25px]"><svg class="block w-[18px] h-[19px]" viewBox="0 0 18 19" fill="none" stroke="#555" stroke-width="1.400"><rect x="1" y="1" width="16" height="17" rx="1"/><path d="M4 7V4h3M4 4l3 3M11 4h3v3M14 4l-3 3M4 12v3h3M4 15l3-3M14 12v3h-3M14 15l-3-3"/></svg></button>
  <button aria-label="缩小" class="ml-[23px]"><svg class="block w-3 h-3" viewBox="0 0 12 12"><path d="M0 6h12" stroke="#777" stroke-width="1.200"/></svg></button>
  <input type="range" aria-label="缩放" min="0" max="100" value="9" class="ml-[9px] w-[113px] h-5 appearance-none bg-transparent [&::-webkit-slider-runnable-track]:h-[2px] [&::-webkit-slider-runnable-track]:bg-[#999] [&::-webkit-slider-thumb]:appearance-none [&::-webkit-slider-thumb]:w-[7px] [&::-webkit-slider-thumb]:h-[17px] [&::-webkit-slider-thumb]:-mt-2 [&::-webkit-slider-thumb]:bg-white [&::-webkit-slider-thumb]:border [&::-webkit-slider-thumb]:border-[#666]">
  <button aria-label="放大" class="ml-[6px]"><svg class="block w-3 h-3" viewBox="0 0 12 12"><path d="M0 6h12M6 0v12" stroke="#777" stroke-width="1.200"/></svg></button>
  <button class="flex items-center ml-4 gap-2"><span class="w-[34px] text-left">45%</span><svg class="w-[7px] h-1 text-[#777]"><use href="#caret"/></svg></button>
  <button aria-label="居中显示" class="ml-[21px]"><svg class="block w-[19px] h-[19px]" viewBox="0 0 19 19" fill="none" stroke="#555" stroke-width="1.600"><path d="M1 6V1h5M13 1h5v5M1 13v5h5M13 18h5v-5"/><rect x="5" y="6" width="9" height="7"/></svg></button>
  <button aria-label="适合宽度" class="ml-6"><svg class="block w-[18px] h-[19px]" viewBox="0 0 18 19" fill="none" stroke="#555" stroke-width="1.500"><rect x="1" y="1" width="16" height="17" rx="1"/><path d="M4 9.500h10M6 7.500l-2 2 2 2M12 7.500l2 2-2 2" stroke-width="1.300"/></svg></button>
  <svg class="w-[7px] h-[7px] ml-[31px] self-end" viewBox="0 0 7 7" fill="#bbb"><path d="M5 0h2v2H5zM5 5h2v2H5zM0 5h2v2H0z"/></svg>
</footer>

<script>
  // 配色按主题顺序循环: [连线, 前几个主题的边框, 填充]
  const palette = [
    ['#dfa3d5', '#c28dba', '#f3e0f0'],
    ['#6fbcf0', '#5ba0d2', '#d5e7f8'],
    ['#e5886f', '#c5745f', '#f5d9d4'],
    ['#7abb8c', '#7abb8c', '#d7e8da'],
    ['#fdcb56', '#dfb244', '#ffecd1'],
    ['#4aabd1', '#3f93b4', '#d0e2ee'],
    ['#ed80b0', '#cd6e99', '#f8d9e5'],
    ['#9dc54a', '#8aab41', '#e1e9cf'],
    ['#d6b993', '#b9a17f', '#f0e7dc'],
    ['#4cc0c0', '#4cc0c0', '#d0e7e8'],
  ];

  // [文字, 左, 右, 行, 标记位置(-1上 1下), 标记数字]
  const topics = [
    ['时间', 376, 422, 0, 1, 2],
    ['约300万年前', 443, 522, 0, -1, 1],
    ['约170万年前', 543, 623, 0, -1, 1],
    ['约70万年至20万年前', 644, 751, 0, -1, 1],
    ['约3万年前', 685, 751, 1, -1, 1],
    ['约7000万年前', 583, 664, 1, -1, 1],
    ['约6000万年前', 482, 562, 1, -1, 1],
    ['约公元前3100年左右', 354, 461, 1, 1, 1],
    ['公元前2400年', 354, 434, 2, 1, 1],
    ['公元前2070年', 455, 535, 2, -1, 1],
    ['公元前18世纪', 556, 637, 2, 1, 2],
    ['公元前17世纪', 658, 738, 2, 1, 1],
    ['约公元前1600年前', 640, 738, 3, -1, 2],
    ['公元前1500年前', 529, 619, 3, 1, 1],
    ['公元前1046年', 428, 508, 3, -1, 1],
    ['公元前842年', 331, 407, 3, -1, 1],
    ['公元前8世纪', 331, 407, 4, 1, 1],
    ['公元前771年', 428, 504, 4, -1, 1],
    ['公元前770年', 525, 601, 4, -1, 1],
    ['公元前6世纪', 622, 697, 4, 1, 2],
    ['公元前509年', 622, 697, 5, 1, 1],
    ['公元前450年左右', 507, 601, 5, 1, 1],
    ['公元前5世纪', 410, 486, 5, 1, 1],
    ['公元前356年', 313, 389, 5, -1, 1],
    ['公元前334年', 313, 389, 6, 1, 1],
    ['公元前264年', 410, 486, 6, 1, 1],
    ['公元前256年', 507, 583, 6, -1, 1],
    ['公元前221年', 604, 679, 6, -1, 1],
    ['公元前218年', 700, 776, 6, 1, 1],
    ['公元前209年', 700, 776, 7, -1, 1],
    ['公元前207年', 604, 679, 7, -1, 1],
    ['公元前202年', 507, 583, 7, -1, 1],
    ['公元前168年', 410, 486, 7, 1, 1],
    ['公元前146年', 313, 389, 7, 1, 1],
    ['公元前141年', 313, 389, 8, -1, 1],
    ['公元前138年', 410, 486, 8, -1, 1],
    ['公元前119年', 507, 583, 8, -1, 1],
    ['公元前107年', 604, 679, 8, 1, 1],
    ['公元前104年', 700, 774, 8, -1, 1],
    ['公元前73年', 705, 774, 9, 1, 1],
    ['公元前60年', 615, 684, 9, -1, 1],
    ['公元前46年', 523, 594, 9, 1, 1],
    ['公元前27年', 430, 502, 9, 1, 2],
    ['公元9年', 352, 409, 9, -1, 1],
    ['公元25年', 352, 414, 10, -1, 1],
  ];

  const rowY = row => row === 0 ? 98 : 146 + (row - 1) * 43;

  function octagon(x1, x2, y, h, cut, stroke, fill) {
    const t = y - h / 2, b = y + h / 2;
    return `<path d="M${x1 + cut} ${t}H${x2 - cut}L${x2} ${t + cut}V${b - cut}L${x2 - cut} ${b}H${x1 + cut}L${x1} ${b - cut}V${t + cut}Z" fill="${fill}" stroke="${stroke}" stroke-width="2"/>`;
  }

  function label(text, x, y, size) {
    return `<text x="${x}" y="${y + 3}" font-size="${size}" text-anchor="middle" fill="#444">${text}</text>`;
  }

  let lines = '', nodes = '';
  let prev = { x1: 305, x2: 355, row: 0, y: 98 };

  topics.forEach(([text, x1, x2, row, side, count], i) => {
    const [line, dark, fill] = palette[i % 10];
    const y = rowY(row);
    const cx = (x1 + x2) / 2;
    const h = i < 3 ? 24 : 21;

    if (row === prev.row) {
      const from = x1 > prev.x1 ? prev.x2 : x2;
      const to = x1 > prev.x1 ? x1 : prev.x1;
      lines += `<path d="M${from} ${y + .5}H${to}" stroke="${line}"/>`;
    } else {
      // 换行处的半圆连线
      const right = prev.row % 2 === 0;
      const x = right ? x2 : x1;
      const ry = (y - prev.y) / 2;
      lines += `<path d="M${x} ${prev.y + .5}A${row === 1 ? 25 : 23} ${ry} 0 0 ${right ? 1 : 0} ${x} ${y + .5}" fill="none" stroke="${line}"/>`;
    }

    const cut = (i === 38 || i === 39 || i === 40) ? 1 : (h === 24 ? 6 : 5);
    nodes += octagon(x1, x2, y + .5, h, cut, i < 9 ? dark : line, fill);
    nodes += label(text, cx, y + .5, 9);

    const solid = i % 10 === 4 || i % 10 === 8;
    const by = y + side * (i < 3 ? 17 : 16) + .5;
    nodes += `<circle cx="${cx}" cy="${by}" r="4" fill="${solid ? '#444' : '#fff'}" stroke="${line}"/>`;
    nodes += `<text x="${cx}" y="${by + 2}" font-size="6" text-anchor="middle" fill="${line}">${count}</text>`;
    prev = { x1, x2, row, y };
  });

  nodes += '<rect x="302.5" y="79.5" width="55" height="37" fill="none" stroke="#c3d3ee"/>';
  nodes += octagon(305, 355, 98, 31, 8, '#46a6a6', '#d0e7e8');
  nodes += label('历史', 329, 99, 10);
  nodes += '<circle cx="358.5" cy="98.5" r="4" fill="#fff" stroke="#4cc0c0"/><path d="M356 98.5h5" stroke="#4cc0c0"/>';

  document.getElementById('canvas').insertAdjacentHTML('beforeend', lines + nodes);
</script>

</body>
</html>
